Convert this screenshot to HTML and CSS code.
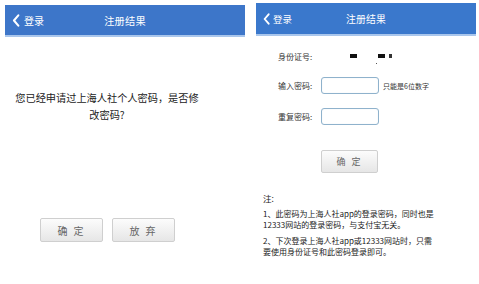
FILE: index.html
```html
<!DOCTYPE html>
<html lang="zh-CN">
<head>
<meta charset="utf-8">
<title>注册结果</title>
<link rel="stylesheet" href="styles.css">
</head>
<body>
<div class="screens">
  <section class="panel panel-left">
    <header class="bar">
      <span class="back"><svg class="chev" viewBox="0 0 8 14" width="8" height="13"><path d="M6.5 1.5 L1.8 7 L6.5 12.5" fill="none" stroke="#fff" stroke-width="2.2" stroke-linecap="round" stroke-linejoin="round"/></svg><span>登录</span></span>
      <span class="title">注册结果</span>
    </header>
    <p class="question">您已经申请过上海人社个人密码，是否修<br>改密码?</p>
    <div class="btns">
      <button class="btn">确 定</button>
      <button class="btn">放 弃</button>
    </div>
  </section>

  <section class="panel panel-right">
    <header class="bar bar-right">
      <span class="back"><svg class="chev" viewBox="0 0 8 14" width="7" height="12"><path d="M6.5 1.5 L1.8 7 L6.5 12.5" fill="none" stroke="#fff" stroke-width="2.2" stroke-linecap="round" stroke-linejoin="round"/></svg><span>登录</span></span>
      <span class="title">注册结果</span>
    </header>
    <div class="form">
      <div class="row row-id">
        <span class="label">身份证号:</span>
        <span class="mask"><i class="m1"></i><i class="m2"></i><i class="m3"></i><i class="m4"></i></span>
      </div>
      <div class="row row-pw">
        <span class="label">输入密码:</span>
        <span class="input"></span>
        <span class="hint">只能是6位数字</span>
      </div>
      <div class="row row-pw2">
        <span class="label">重复密码:</span>
        <span class="input"></span>
      </div>
      <div class="row row-btn">
        <button class="btn btn-small">确 定</button>
      </div>
    </div>
    <div class="notes">
      <p class="nt">注:</p>
      <p>1、此密码为上海人社app的登录密码，同时也是<br>12333网站的登录密码，与支付宝无关。</p>
      <p>2、下次登录上海人社app或12333网站时，只需<br>要使用身份证号和此密码登录即可。</p>
    </div>
  </section>
</div>
</body>
</html>
```
FILE: styles.css
```css
* { box-sizing: border-box; }
html, body { margin: 0; padding: 0; background: #fff; }
body {
  font-family: "Noto Sans CJK SC", "Liberation Sans", sans-serif;
  color: #222;
  width: 479px;
  height: 284px;
  overflow: hidden;
}
.screens {
  display: flex;
  align-items: flex-start;
  padding-left: 5px;
  gap: 11px;
}
.panel { position: relative; }
.panel-left { width: 240px; margin-top: 5px; }
.panel-right { width: 220px; margin-top: 3px; }

.bar {
  position: relative;
  height: 32px;
  background: #3d76c9;
  border-bottom: 2px solid #a9c6ec;
  color: #fff;
  display: flex;
  align-items: center;
  justify-content: center;
}
.bar-right { height: 33px; background: #3a78cc; }
.back {
  position: absolute;
  left: 7px;
  top: 0;
  bottom: 0;
  display: flex;
  align-items: center;
  gap: 4px;
  font-size: 10px;
}
.bar-right .back { left: 7px; gap: 3px; font-size: 9.5px; }
.chev { display: block; }
.title { font-size: 10.2px; letter-spacing: 0.2px; }
.bar-right .title { font-size: 9.8px; }

.question {
  margin: 52px 0 0 0;
  width: 204px;
  font-size: 10.2px;
  line-height: 17px;
  text-align: center;
  color: #222;
}
.btns {
  display: flex;
  gap: 9px;
  margin: 95px 0 0 35px;
}
.btn {
  width: 63px;
  height: 24px;
  padding: 0;
  border: 1px solid #cfcfcf;
  border-radius: 2px;
  background: linear-gradient(#fcfcfc, #e6e6e6);
  color: #666;
  font-family: "Noto Sans CJK SC", sans-serif;
  font-size: 10px;
  letter-spacing: 2px;
}
.btn-small { width: 57px; height: 23px; font-size: 9px; }

.form { padding-left: 22px; }
.row {
  display: flex;
  align-items: center;
  font-size: 8px;
  color: #333;
}
.label { width: 43px; }
.row-id { height: 12px; margin-top: 14px; }
.mask { position: relative; display: block; width: 80px; height: 12px; }
.mask i { position: absolute; background: #111; height: 4px; top: 4px; }
.mask .m1 { left: 29px; width: 7px; }
.mask .m2 { left: 57px; width: 7px; }
.mask .m3 { left: 68px; width: 3px; background: #333; }
.mask .m4 { left: 55px; top: 13px; width: 1px; height: 1px; background: #555; }
.row-pw { margin-top: 15px; }
.row-pw2 { margin-top: 14px; }
.input {
  display: block;
  width: 58px;
  height: 17px;
  border: 1px solid #8fb2cc;
  border-radius: 3px;
  background: #fff;
  box-shadow: inset 0 0 1px #cfe0ec;
}
.hint { margin-left: 4px; font-size: 7px; color: #333; }
.row-btn { margin-top: 25px; padding-left: 43px; }

.notes {
  margin-top: 20px;
  padding-left: 7px;
  font-size: 8px;
  line-height: 11px;
  color: #222;
}
.notes p { margin: 0 0 5px 0; }
.notes .nt { margin-bottom: 4px; font-size: 8.5px; }
```
